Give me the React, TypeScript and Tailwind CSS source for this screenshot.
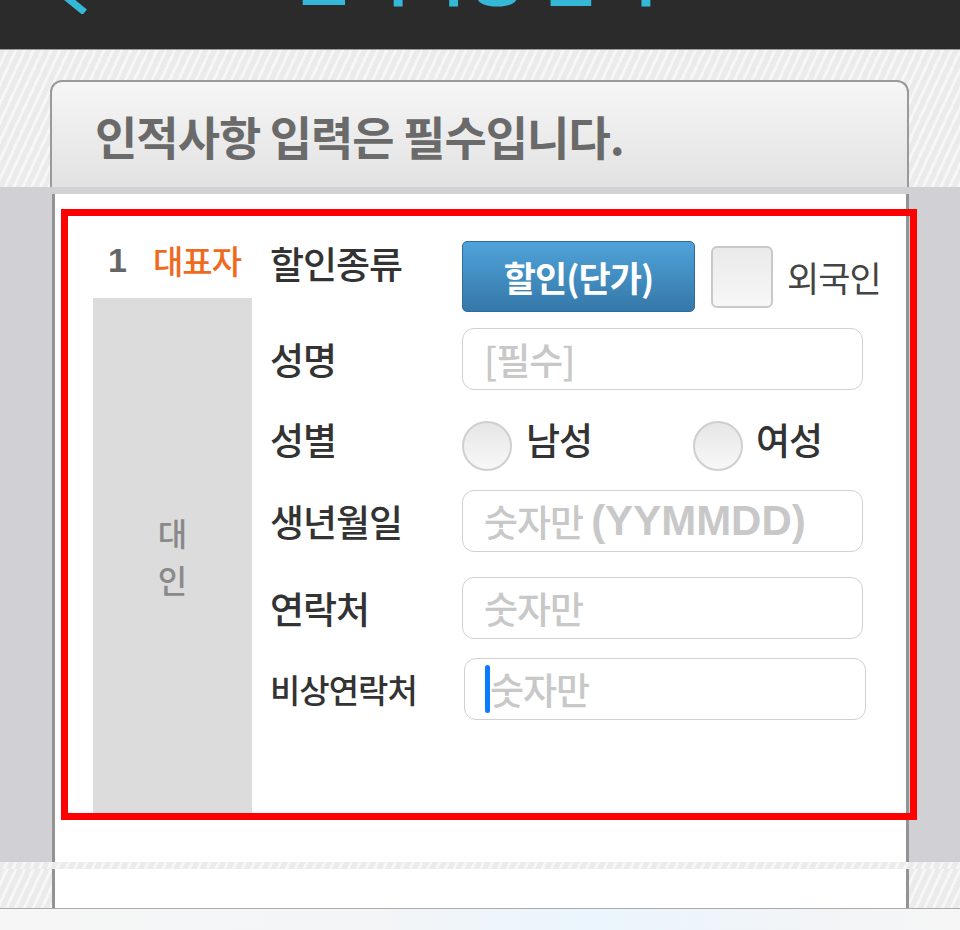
import React from "react";

const stripe =
  "bg-[repeating-linear-gradient(115deg,#ebebeb_0px,#ebebeb_5px,#f6f6f6_5px,#f6f6f6_8px)]";

function Label({ children, small }: { children: React.ReactNode; small?: boolean }) {
  return (
    <div
      className={
        small
          ? "w-[192px] shrink-0 text-[33px] font-medium text-[#333] tracking-[-1px] leading-none"
          : "w-[192px] shrink-0 text-[37px] font-medium text-[#333] tracking-[-1px] leading-none"
      }
    >
      {children}
    </div>
  );
}

function Field({ children, caret }: { children: React.ReactNode; caret?: boolean }) {
  return (
    <div
      className={
        caret
          ? "relative ml-[2px] w-[402px] h-[62px] border border-[#d0d0d0] rounded-[12px] flex items-center pl-[25px] text-[#c8c8c8] text-[37px] font-medium tracking-[-1px] leading-none bg-white"
          : "relative w-[401px] h-[62px] border border-[#d0d0d0] rounded-[12px] flex items-center pl-[21px] text-[#c8c8c8] text-[37px] font-medium tracking-[-1px] leading-none bg-white"
      }
    >
      {caret && (
        <span className="absolute left-[20px] top-[6px] w-[5px] h-[48px] rounded-full bg-[#0a7aff]" />
      )}
      {children}
    </div>
  );
}

function Radio() {
  return (
    <span className="mt-[14px] w-[50px] h-[50px] shrink-0 rounded-full border-2 border-[#cfcfcf] bg-gradient-to-b from-[#e6e6e6] to-[#f8f8f8]" />
  );
}

export default function App() {
  return (
    <div className="w-[960px] h-[930px] overflow-hidden flex flex-col bg-white font-['Noto_Sans_CJK_KR','Noto_Sans',sans-serif]">
      {/* top bar */}
      <header className="h-[50px] shrink-0 bg-[#2b2b2b] border-b border-[#9c9c9c] overflow-hidden">
        <div className="-mt-[58px] h-[72px] flex items-end pl-[40px]">
          <svg width="50" height="60" viewBox="0 0 50 60" className="shrink-0">
            <polyline
              points="40,4 10,30 42,56"
              fill="none"
              stroke="#35b8d8"
              strokeWidth="7"
              strokeLinecap="square"
            />
          </svg>
          <div className="ml-[200px] mb-[10px] text-[66px] font-bold leading-none text-[#35b8d8] tracking-[-2px] whitespace-nowrap">
            인적사항 입력
          </div>
        </div>
      </header>

      {/* notice card */}
      <div className={`h-[137px] shrink-0 pt-[30px] pl-[50px] ${stripe}`}>
        <div className="w-[859px] h-[107px] rounded-t-[12px] border-2 border-b-0 border-[#9a9a9a] bg-gradient-to-b from-[#f6f6f6] to-[#e2e2e2] flex items-center pl-[43px]">
          <span className="text-[46px] font-bold text-[#6a6a6a] tracking-[-1px] leading-none">
            인적사항 입력은 필수입니다.
          </span>
        </div>
      </div>

      {/* form area */}
      <div className="h-[675px] shrink-0 bg-[#d0d0d5] pt-[7px] pl-[52px]">
        <div className="w-[857px] h-[668px] bg-white border-x-[3px] border-[#939393] pt-[15px] pl-[6px]">
          <div className="w-[856px] h-[611px] border-[7px] border-[#ff0000] flex">
            {/* left column */}
            <div className="w-[202px] shrink-0 pl-[25px] flex flex-col">
              <div className="h-[82px] pt-[6px] pl-[15px] flex items-center">
                <span className="font-['Liberation_Sans',sans-serif] font-bold text-[34px] text-[#666] leading-none">
                  1
                </span>
                <span className="ml-[26px] text-[33px] font-medium text-[#f06a1d] tracking-[-1px] leading-none">
                  대표자
                </span>
              </div>
              <div className="flex-1 w-[159px] bg-[#dcdcdc] flex items-center justify-center">
                <div className="flex flex-col items-center text-[32px] font-medium text-[#8a8a8a] leading-[47px]">
                  <span>대</span>
                  <span>인</span>
                </div>
              </div>
            </div>

            {/* right column */}
            <div className="flex-1 pt-[25px] flex flex-col">
              <div className="h-[71px] flex items-center">
                <div className="mb-[26px]">
                  <Label>할인종류</Label>
                </div>
                <button className="w-[233px] h-[71px] shrink-0 rounded-[5px] border border-[#2f6c99] bg-gradient-to-b from-[#4fa3d9] to-[#3678a9] text-white font-bold text-[35px] tracking-[-1px] leading-none flex items-center justify-center">
                  할인(단가)
                </button>
                <span className="ml-[16px] w-[62px] h-[62px] shrink-0 rounded-[6px] border-2 border-[#c9c9c9] bg-gradient-to-b from-[#eaeaea] to-[#f7f7f7]" />
                <span className="ml-[14px] text-[35px] text-[#444] tracking-[-1px] leading-none">
                  외국인
                </span>
              </div>

              <div className="mt-[16px] h-[62px] flex items-center">
                <Label>성명</Label>
                <Field>[필수]</Field>
              </div>

              <div className="mt-[18px] h-[62px] flex items-center">
                <Label>성별</Label>
                <div className="w-[231px] flex items-center">
                  <Radio />
                  <span className="ml-[14px] text-[37px] font-medium text-[#333] tracking-[-1px] leading-none">
                    남성
                  </span>
                </div>
                <div className="flex items-center">
                  <Radio />
                  <span className="ml-[13px] text-[37px] font-medium text-[#333] tracking-[-1px] leading-none">
                    여성
                  </span>
                </div>
              </div>

              <div className="mt-[20px] h-[62px] flex items-center">
                <Label>생년월일</Label>
                <Field>
                  숫자만{" "}
                  <span className="ml-[8px] text-[42px] font-bold font-['Liberation_Sans',sans-serif] tracking-[0px]">
                    (YYMMDD)
                  </span>
                </Field>
              </div>

              <div className="mt-[25px] h-[62px] flex items-center">
                <Label>연락처</Label>
                <Field>숫자만</Field>
              </div>

              <div className="mt-[19px] h-[62px] flex items-center">
                <Label small>비상연락처</Label>
                <Field caret>숫자만</Field>
              </div>
            </div>
          </div>
        </div>
      </div>

      {/* striped separator */}
      <div className={`h-[7px] shrink-0 ${stripe}`} />

      {/* lower panel row */}
      <div className={`h-[39px] shrink-0 flex ${stripe}`}>
        <div className="w-[52px] shrink-0" />
        <div className="w-[857px] shrink-0 bg-white border-x-[3px] border-[#939393]" />
      </div>

      {/* bottom bar */}
      <div className="flex-1 border-t border-[#aaaaaa] bg-[linear-gradient(90deg,#f6f6f6_0%,#f3f5f7_40%,#eaf5fd_62%,#f1f4f7_82%,#f6f6f6_100%)]" />
    </div>
  );
}
